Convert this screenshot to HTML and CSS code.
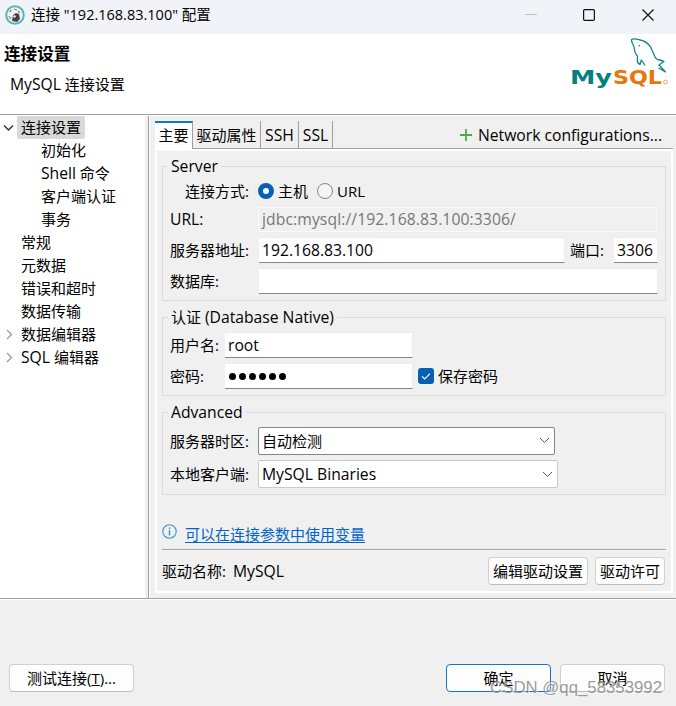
FILE: index.html
```html
<!DOCTYPE html>
<html lang="zh-CN">
<head>
<meta charset="utf-8">
<title>连接配置</title>
<link rel="stylesheet" href="styles.css">
</head>
<body>
<div class="window">
  <header class="titlebar">
    <svg class="app-icon" width="20" height="20" viewBox="0 0 20 20"><circle cx="10" cy="10" r="8.800" fill="#f4f4f4" stroke="#4fb8bd" stroke-width="2"/><path d="M8 10l3-2 3 1 1 5-3 3-5-1z" fill="#4b4040"/><path d="M4.500 7l2-2M9 4l3 1M4 11l2 3M13 6l2 2" stroke="#8d8585" stroke-width="1.300"/><path d="M8 11l2-1 1 2-2 1z" fill="#eee"/></svg>
    <span class="title">连接 "192.168.83.100" 配置</span>
    <svg class="controls" width="124" height="14" viewBox="0 0 124 14" fill="none"><path d="M0 6.500h12" stroke="#c0c1c5"/><rect x="58.600" y="1.600" width="10.800" height="10.800" rx="1.200" stroke="#111" stroke-width="1.200"/><path d="M117.500 1.500l11 11m0-11l-11 11" stroke="#111" stroke-width="1.200"/></svg>
  </header>
  <section class="banner">
    <div>
      <h1>连接设置</h1>
      <p class="subtitle"><span class="en">MySQL</span> 连接设置</p>
    </div>
    <svg class="logo" width="98" height="52" viewBox="0 0 98 52">
      <text x="-1" y="46" class="logo-my" textLength="42" lengthAdjust="spacingAndGlyphs">My</text>
      <text x="42" y="46" class="logo-sql" textLength="49" lengthAdjust="spacingAndGlyphs">SQL</text>
      <circle cx="94.500" cy="44" r="1.900" fill="none" stroke="#ef9a4a" stroke-width=".9"/>
      <path d="M74 27.500L70.300 22l-1.300 4.500c-4-1.500-2.500-6-2.500-8.500-2.500-2-3-5-3.200-8C63 7 60 4.500 60.500 1.500c2.500-1.500 5-.5 8.500.5 4 .5 7 2.500 9.500 5.500 2 2.500 2.500 5 4 8 .8 2.500 1.500 4.500 3.500 5.800 2 .8 5 .8 7 2.200l-5 3.500 6.500 7-7-4" fill="none" stroke="#138787" stroke-width="1.300" stroke-linejoin="round"/>
      <circle cx="68.300" cy="7.800" r=".8" fill="#0c8282"/>
    </svg>
  </section>
  <main class="body">
    <nav class="tree">
      <div class="node"><svg class="twisty" width="11" height="8" viewBox="0 0 11 8"><path d="M1 1.500l4.500 4.500 4.500-4.500" fill="none" stroke="#333" stroke-width="1.500"/></svg><span class="label selected">连接设置</span></div>
      <div class="node child">初始化</div>
      <div class="node child"><span class="en">Shell</span>&nbsp;命令</div>
      <div class="node child">客户端认证</div>
      <div class="node child">事务</div>
      <div class="node leaf">常规</div>
      <div class="node leaf">元数据</div>
      <div class="node leaf">错误和超时</div>
      <div class="node leaf">数据传输</div>
      <div class="node"><svg class="twisty" width="11" height="11" viewBox="0 0 11 11"><path d="M4 1l4.500 4.500-4.500 4.500" fill="none" stroke="#999" stroke-width="1.300"/></svg><span class="label">数据编辑器</span></div>
      <div class="node"><svg class="twisty" width="11" height="11" viewBox="0 0 11 11"><path d="M4 1l4.500 4.500-4.500 4.500" fill="none" stroke="#999" stroke-width="1.300"/></svg><span class="label"><span class="en">SQL</span> 编辑器</span></div>
    </nav>
    <section class="content">
      <div class="tabs">
        <span class="tab active">主要</span>
        <span class="tab wide">驱动属性</span>
        <span class="tab ssh en">SSH</span>
        <span class="tab ssl en">SSL</span>
        <div class="network"><svg width="12" height="12" viewBox="0 0 12 12"><path d="M6 0v12M0 6h12" stroke="#4caa4c" stroke-width="1.800"/></svg><span class="en">Network configurations...</span></div>
      </div>
      <div class="page">
        <div class="group server">
          <div class="legend en">Server</div>
          <div class="row radios">
            <span>连接方式:</span>
            <i class="radio on"></i><span>主机</span>
            <i class="radio"></i><span>URL</span>
          </div>
          <div class="row"><span class="name en">URL:</span><span class="field readonly">jdbc:mysql://192.168.83.100:3306/</span></div>
          <div class="row spaced"><span class="name">服务器地址:</span><span class="field address en">192.168.83.100</span><span class="port-name">端口:</span><span class="field port en">3306</span></div>
          <div class="row spaced"><span class="name">数据库:</span><span class="field database"></span></div>
        </div>
        <div class="group auth">
          <div class="legend">认证 <span class="en">(Database Native)</span></div>
          <div class="row spaced"><span class="name">用户名:</span><span class="field user en">root</span></div>
          <div class="row spaced"><span class="name">密码:</span><span class="field user dots"><i></i><i></i><i></i><i></i><i></i><i></i></span>
            <svg class="check" width="16" height="16" viewBox="0 0 16 16"><rect width="16" height="16" rx="3" fill="#0560b6"/><path d="M4 8.300l2.700 2.700 5.300-5.300" fill="none" stroke="#fff" stroke-width="1.100"/></svg><span>保存密码</span></div>
        </div>
        <div class="group advanced">
          <div class="legend en">Advanced</div>
          <div class="row spaced combo-row"><span class="name">服务器时区:</span><span class="combo timezone">自动检测<svg width="11" height="7" viewBox="0 0 11 7"><path d="M1 1l4.500 4.500 4.500-4.500" fill="none" stroke="#555"/></svg></span></div>
          <div class="row spaced combo-row"><span class="name">本地客户端:</span><span class="combo client"><span class="en">MySQL Binaries</span><svg width="11" height="7" viewBox="0 0 11 7"><path d="M1 1l4.500 4.500 4.500-4.500" fill="none" stroke="#555"/></svg></span></div>
        </div>
        <div class="hint"><svg width="15" height="15" viewBox="0 0 15 15"><circle cx="7.500" cy="7.500" r="6.700" fill="none" stroke="#3c93cf" stroke-width="1.100"/><path d="M7.500 6v5.500M7.500 3.500v1.500" stroke="#3c93cf" stroke-width="1.400"/></svg><a>可以在连接参数中使用变量</a></div>
        <div class="driver">
          <span>驱动名称:</span><span class="driver-name en">MySQL</span>
          <span class="button edit">编辑驱动设置</span><span class="button license">驱动许可</span>
        </div>
      </div>
    </section>
  </main>
  <footer class="footer">
    <span class="button test">测试连接(<u>T</u>)...</span>
    <span class="button ok">确定</span>
    <span class="button cancel">取消</span>
  </footer>
  <div class="watermark">CSDN @qq_58353992</div>
</div>
</body>
</html>
```
FILE: styles.css
```css
* { box-sizing: border-box; }
body {
  margin: 0;
  font: 15px/20px "Open Sans", "Noto Sans CJK SC", sans-serif;
  color: #000;
  background: #f0f0f0;
}
.en { font-size: 15.700px; }
.window { position: relative; width: 676px; height: 706px; overflow: hidden; white-space: nowrap; }
.titlebar { height: 34px; padding: 5px 0 9px 5px; display: flex; align-items: center; background: #f1f3f8; }
.title { margin-left: 6px; font-size: 14.500px; }
.controls { width: 124px; margin-left: auto; margin-right: 27px; overflow: visible; }
.banner { height: 82px; display: flex; justify-content: space-between; background: #fff; border-bottom: 1px solid #fff; box-shadow: inset 0 -1px #a0a0a0; }
h1 { margin: 10px 0 0 4px; font-size: 16.600px; line-height: 20px; font-weight: 600; }
.subtitle { height: 20px; margin: 10px 0 0 10px; }
.logo { margin: 4px 7px 0 0; overflow: visible; }
.logo-my, .logo-sql { font: 700 19.500px "DejaVu Sans", sans-serif; }
.logo-my { fill: #087f7f; }
.logo-sql { fill: #e9750c; }
.body { height: 484px; display: flex; border-bottom: 1px solid #fff; box-shadow: inset 0 -1px #a0a0a0; padding-bottom: 1px; }
.tree { width: 145px; background: #fff; }
.node { height: 23px; display: flex; align-items: center; padding: 0 0 2px 3px; }
.twisty { width: 11px; margin: 2px 3px 0 0; }
.label { padding: 0 4px; height: 22px; line-height: 22px; border-radius: 2px; }
.selected { background: #d9d9d9; height: 23px; padding-bottom: 1px; margin-top: 1px; }
.node .child { padding-left: 41px; }
.child { padding-left: 41px; }
.leaf { padding-left: 21px; }
.content { flex: 1; margin-left: 3px; border-left: 1px solid #a0a0a0; box-shadow: inset 1px 0 #fff; padding: 5px 3px 5px 6px; }
.tabs { height: 28px; display: flex; box-shadow: inset 0 -1px #a0a0a0; }
.tab { border-right: 1px solid #a0a0a0; height: 27px; line-height: 28px; text-align: center; }
.active { width: 38px; height: 28px; background: #fff; border-top: 2px solid #0f78d4; line-height: 24px; }
.wide { width: 68px; }
.ssh { width: 38px; }
.ssl { width: 34px; }
.network { margin-left: auto; margin-right: 11px; display: flex; align-items: center; gap: 6px; }
.page { height: 444px; border: 2px solid #fff; padding: 15px 5px 0 5px; }
.group { border: 1px solid #dcdcdc; padding-left: 7px; }
.server { height: 135px; }
.auth { height: 79px; margin-top: 16px; }
.advanced { height: 83px; margin-top: 16px; }
.legend { width: max-content; height: 20px; margin: -11px 0 0 -2px; padding: 0 3px; background: #f0f0f0; }
.row { height: 26px; display: flex; align-items: center; }
.spaced { margin-top: 5px; }
.radios { height: 30px; padding-left: 15px; }
.radio { width: 16px; height: 16px; margin: 0 4px 0 9px; border: 1px solid #858585; border-radius: 50%; background: #f5f5f5; }
.radio.on { border: 5px solid #0560b6; background: #fff; }
.name { width: 89px; flex: none; }
.auth .name { width: 55px; }
.combo-row { height: 28px; }
.combo-row .name { width: 88px; }
.field { height: 26px; line-height: 25px; padding-left: 3px; background: #fff; border: 1px solid #ececec; border-bottom: 1px solid #858585; border-left: 0; }
.readonly { width: 399px; height: 25px; line-height: 22px; font-size: 15.700px; letter-spacing: .1px; color: #777; background: #f0f0f0; border: 1px solid #fafafa; margin-left: -1px; }
.address { width: 306px; }
.port-name { margin-left: 5px; width: 44px; }
.port { width: 44px; }
.database { width: 399px; }
.user { width: 188px; }
.dots { display: flex; align-items: center; gap: 3px; padding-left: 4px; }
.dots i { width: 7px; height: 7px; border-radius: 50%; background: #000; }
.check { margin: 0 4px 0 5px; }
.combo { height: 28px; border: 1px solid #858585; border-radius: 2px; background: #fff; padding: 0 4px 0 3px; display: flex; align-items: center; justify-content: space-between; }
.timezone { width: 297px; line-height: 18px; padding-bottom: 1px; }
.client { width: 300px; border-color: #c9c9c9; }
.hint { height: 54px; padding-top: 24px; display: flex; align-items: center; gap: 8px; color: #0066cc; }
.hint svg { margin: -5px 0 0 0; }
.hint a { text-decoration: underline; text-underline-offset: 2px; text-decoration-thickness: 1px; }
.driver { height: 43px; border-top: 1px solid #a0a0a0; box-shadow: inset 0 1px #fafafa; display: flex; align-items: center; padding-right: 1px; }
.driver-name { margin-left: 7px; }
.button { height: 28px; line-height: 26px; text-align: center; border: 1px solid #d0d0d0; border-bottom-color: #bcbcbc; border-radius: 4px; background: #fdfdfd; }
.edit { width: 100px; margin-left: auto; }
.license { width: 70px; margin-left: 7px; }
.footer { height: 106px; padding: 64px 11px 0 9px; display: flex; }
.test { width: 125px; }
.ok { width: 105px; margin-left: auto; border-color: #0f78d4; }
.cancel { width: 105px; margin-left: 9px; }
.watermark { position: absolute; right: 14px; bottom: 8px; font: 16.800px/20px "Liberation Sans", sans-serif; color: rgba(130, 130, 130, .8); text-shadow: 1px 1px rgba(255, 255, 255, .6); }
```
